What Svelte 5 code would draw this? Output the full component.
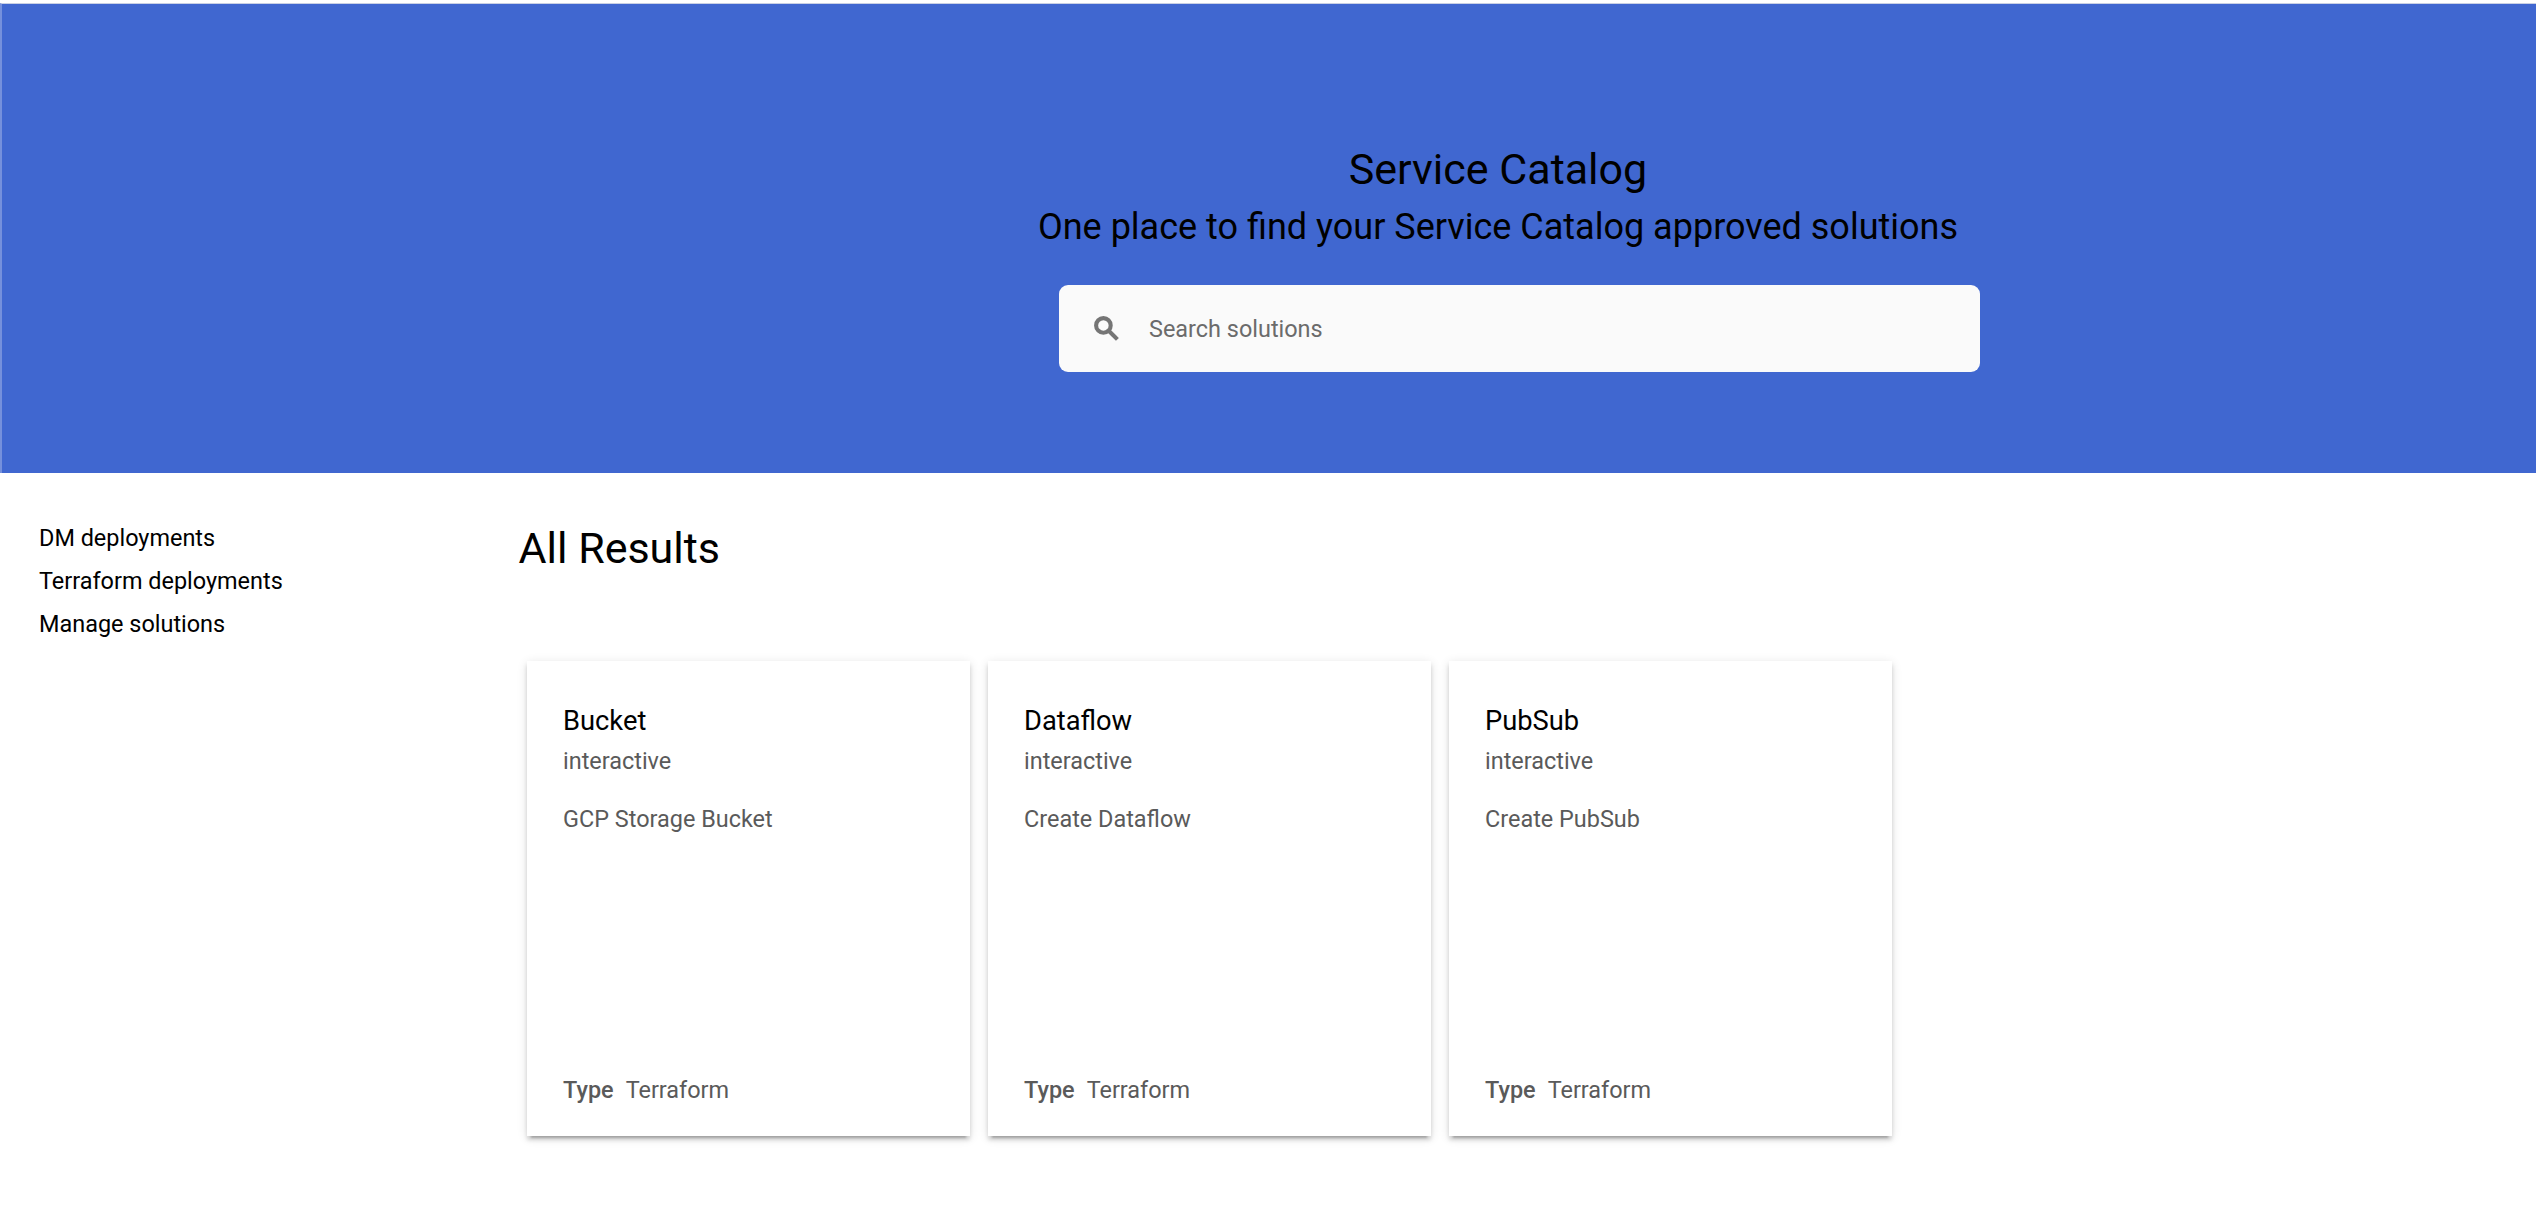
<script>
  const links = ['DM deployments', 'Terraform deployments', 'Manage solutions'];

  const solutions = [
    { name: 'Bucket', tagline: 'interactive', description: 'GCP Storage Bucket', type: 'Terraform' },
    { name: 'Dataflow', tagline: 'interactive', description: 'Create Dataflow', type: 'Terraform' },
    { name: 'PubSub', tagline: 'interactive', description: 'Create PubSub', type: 'Terraform' }
  ];
</script>

<div class="page">
  <header class="hero">
    <h1 class="title">Service Catalog</h1>
    <p class="subtitle">One place to find your Service Catalog approved solutions</p>
    <label class="search">
      <svg class="search-icon" viewBox="0 0 25 25" aria-hidden="true">
        <circle cx="9.4" cy="9.4" r="7.3" />
        <path d="M14.2 14.2 23.4 23.4" />
      </svg>
      <input class="search-input" type="text" placeholder="Search solutions" />
    </label>
  </header>

  <div class="body">
    <nav class="side">
      {#each links as link}
        <a class="side-link" href="#top">{link}</a>
      {/each}
    </nav>

    <main class="results">
      <h2 class="results-title">All Results</h2>
      <div class="cards">
        {#each solutions as s}
          <article class="card">
            <h3 class="card-name">{s.name}</h3>
            <p class="card-tagline">{s.tagline}</p>
            <p class="card-description">{s.description}</p>
            <p class="card-type"><span class="card-type-label">Type</span><span>{s.type}</span></p>
          </article>
        {/each}
      </div>
    </main>
  </div>
</div>

<style>
  :global(body) {
    background: #fff;
  }

  .page {
    box-sizing: border-box;
    min-height: 1230px;
    padding-top: 3px;
    font-family: Roboto, 'Liberation Sans', sans-serif;
    font-size: 23.45px;
    color: #000;
  }

  h1, h2, h3, p {
    margin: 0;
    font-weight: 400;
  }

  .hero {
    box-sizing: border-box;
    display: flex;
    flex-direction: column;
    align-items: center;
    height: 470px;
    padding: 140px 0 0 458px;
    background: #4067d0;
    border-top: 1px solid #c9d0e4;
    border-left: 2px solid #7590dc;
  }

  .title {
    font-size: 43px;
    line-height: 50px;
  }

  .subtitle {
    margin-top: 8px;
    font-size: 36px;
    line-height: 50px;
  }

  .search {
    box-sizing: border-box;
    display: flex;
    align-items: center;
    width: 921px;
    height: 87px;
    margin: 33px 0 0 43px;
    padding-left: 35px;
    border-radius: 9px;
    background: #fafafa;
  }

  .search-icon {
    flex: none;
    width: 25px;
    height: 25px;
    margin-bottom: 1px;
    fill: none;
    stroke: #757575;
    stroke-width: 4.1;
  }

  .search-input {
    flex: 1;
    margin-left: 30px;
    padding: 0;
    border: 0;
    outline: 0;
    background: transparent;
    font: inherit;
    color: #212121;
  }

  .search-input::placeholder {
    color: #6b6b6b;
    opacity: 1;
  }

  .body {
    display: grid;
    grid-template-columns: 479px 1fr;
    padding: 43px 40px 0 39.5px;
  }

  .side {
    display: flex;
    flex-direction: column;
    padding-top: 1px;
  }

  .side-link {
    line-height: 43px;
    margin-left: -0.5px;
    color: inherit;
    text-decoration: none;
  }

  .results-title {
    margin-top: 7px;
    font-size: 43px;
    line-height: 50px;
  }

  .cards {
    display: flex;
    gap: 18px;
    margin: 88px 0 0 8.5px;
  }

  .card {
    box-sizing: border-box;
    display: flex;
    flex-direction: column;
    width: 443px;
    height: 475px;
    padding: 40px 36px 26px;
    background: #fff;
    box-shadow:
      0 6px 2px -4px rgba(0, 0, 0, 0.2),
      0 4px 4px rgba(0, 0, 0, 0.14),
      0 2px 10px rgba(0, 0, 0, 0.12);
  }

  .card-name {
    font-size: 27.3px;
    line-height: 40px;
  }

  .card-tagline,
  .card-description,
  .card-type {
    line-height: 40px;
    color: #5a5a5a;
  }

  .card-description {
    margin-top: 18px;
  }

  .card-type {
    display: flex;
    gap: 12px;
    margin-top: auto;
  }

  .card-type-label {
    font-weight: 500;
  }
</style>
